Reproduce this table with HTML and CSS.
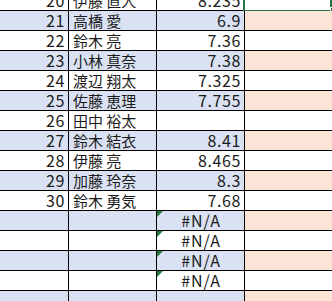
FILE: index.html
```html
<!DOCTYPE html>
<html lang="ja">
<head>
<meta charset="utf-8">
<link rel="stylesheet" href="styles.css">
</head>
<body>
<div class="sheet">
  <div class="row"><div class="c a">20</div><div class="c b">伊藤 直人</div><div class="c v">8.235</div><div class="c d sel"><span class="selbox"></span><span class="handle"></span></div></div>
  <div class="row band"><div class="c a">21</div><div class="c b">高橋 愛</div><div class="c v">6.9</div><div class="c d"></div></div>
  <div class="row"><div class="c a">22</div><div class="c b">鈴木 亮</div><div class="c v">7.36</div><div class="c d"></div></div>
  <div class="row band"><div class="c a">23</div><div class="c b">小林 真奈</div><div class="c v">7.38</div><div class="c d"></div></div>
  <div class="row"><div class="c a">24</div><div class="c b">渡辺 翔太</div><div class="c v">7.325</div><div class="c d"></div></div>
  <div class="row band"><div class="c a">25</div><div class="c b">佐藤 恵理</div><div class="c v">7.755</div><div class="c d"></div></div>
  <div class="row"><div class="c a">26</div><div class="c b">田中 裕太</div><div class="c v"></div><div class="c d"></div></div>
  <div class="row band"><div class="c a">27</div><div class="c b">鈴木 結衣</div><div class="c v">8.41</div><div class="c d"></div></div>
  <div class="row"><div class="c a">28</div><div class="c b">伊藤 亮</div><div class="c v">8.465</div><div class="c d"></div></div>
  <div class="row band"><div class="c a">29</div><div class="c b">加藤 玲奈</div><div class="c v">8.3</div><div class="c d"></div></div>
  <div class="row"><div class="c a">30</div><div class="c b">鈴木 勇気</div><div class="c v">7.68</div><div class="c d"></div></div>
  <div class="row band"><div class="c a"></div><div class="c b"></div><div class="c v err"><span class="tri"></span>#N/A</div><div class="c d"></div></div>
  <div class="row"><div class="c a"></div><div class="c b"></div><div class="c v err"><span class="tri"></span>#N/A</div><div class="c d"></div></div>
  <div class="row band"><div class="c a"></div><div class="c b"></div><div class="c v err"><span class="tri"></span>#N/A</div><div class="c d"></div></div>
  <div class="row"><div class="c a"></div><div class="c b"></div><div class="c v err"><span class="tri"></span>#N/A</div><div class="c d"></div></div>
  <div class="row band"><div class="c a"></div><div class="c b"></div><div class="c v"></div><div class="c d"></div></div>
</div>
</body>
</html>
```
FILE: styles.css
```css
html, body {
  margin: 0;
  padding: 0;
  background: #ffffff;
  overflow: hidden;
}
.sheet {
  margin-top: -9px;
  font-family: "Noto Sans CJK JP", "Noto Sans", sans-serif;
  font-size: 15px;
  color: #1a1a1a;
  width: 340px;
}
.row {
  display: grid;
  grid-template-columns: 69px 88px 88px 95px;
  height: 20px;
}
.c {
  position: relative;
  box-sizing: border-box;
  height: 20px;
  border-bottom: 1px solid #000;
  border-right: 1px solid #000;
  display: flex;
  align-items: flex-end;
  line-height: 19px;
  white-space: nowrap;
  background: #ffffff;
}
.c.d { border-right: none; }
.band .c { background: #d9e1f2; }
.band .c.d { background: #fce4d6; }
.a, .v {
  font-size: 16px;
  letter-spacing: 0.6px;
  justify-content: flex-end;
  padding-right: 3px;
}
.b { padding-left: 4px; }
.v.err { justify-content: center; padding-right: 0; padding-left: 1px; letter-spacing: 1px; }
.tri {
  position: absolute;
  left: 0;
  top: 0;
  width: 0;
  height: 0;
  border-top: 6px solid #1e7b3a;
  border-right: 6px solid transparent;
}
.selbox {
  position: absolute;
  left: -2px;
  top: -2px;
  right: 8px;
  bottom: -2px;
  border: 2px solid #217346;
  border-top: none;
}
.handle {
  position: absolute;
  left: 85px;
  bottom: -4px;
  width: 5px;
  height: 5px;
  background: #217346;
  border: 1px solid #ffffff;
}
```
